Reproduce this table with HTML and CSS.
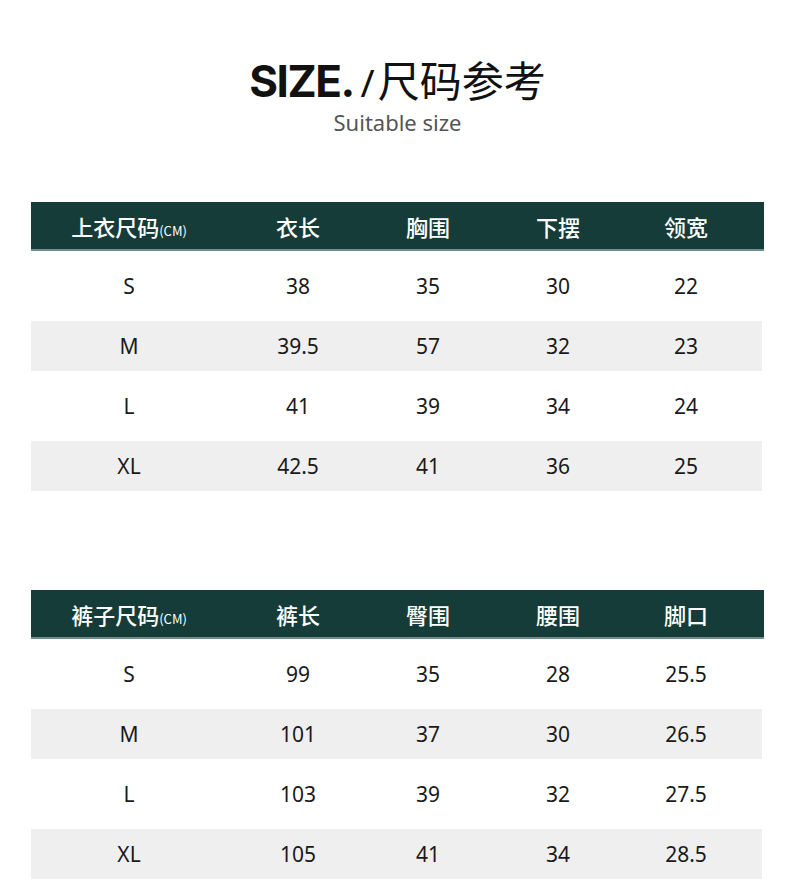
FILE: index.html
```html
<!DOCTYPE html>
<html lang="zh">
<head>
<meta charset="utf-8">
<link rel="stylesheet" href="styles.css">
</head>
<body>
<div class="page">
  <header class="title-block">
    <h1 class="title"><span class="title-en">SIZE.</span><span class="title-slash">/</span><span class="title-cn">尺码参考</span></h1>
    <p class="subtitle">Suitable size</p>
  </header>

  <section class="table table-top">
    <div class="thead">
      <div class="cell">上衣尺码<small>(CM)</small></div>
      <div class="cell">衣长</div>
      <div class="cell">胸围</div>
      <div class="cell">下摆</div>
      <div class="cell">领宽</div>
    </div>
    <div class="tbody">
      <div class="row"><div class="cell">S</div><div class="cell">38</div><div class="cell">35</div><div class="cell">30</div><div class="cell">22</div></div>
      <div class="row alt"><div class="cell">M</div><div class="cell">39.5</div><div class="cell">57</div><div class="cell">32</div><div class="cell">23</div></div>
      <div class="row"><div class="cell">L</div><div class="cell">41</div><div class="cell">39</div><div class="cell">34</div><div class="cell">24</div></div>
      <div class="row alt"><div class="cell">XL</div><div class="cell">42.5</div><div class="cell">41</div><div class="cell">36</div><div class="cell">25</div></div>
    </div>
  </section>

  <section class="table table-bottom">
    <div class="thead">
      <div class="cell">裤子尺码<small>(CM)</small></div>
      <div class="cell">裤长</div>
      <div class="cell">臀围</div>
      <div class="cell">腰围</div>
      <div class="cell">脚口</div>
    </div>
    <div class="tbody">
      <div class="row"><div class="cell">S</div><div class="cell">99</div><div class="cell">35</div><div class="cell">28</div><div class="cell">25.5</div></div>
      <div class="row alt"><div class="cell">M</div><div class="cell">101</div><div class="cell">37</div><div class="cell">30</div><div class="cell">26.5</div></div>
      <div class="row"><div class="cell">L</div><div class="cell">103</div><div class="cell">39</div><div class="cell">32</div><div class="cell">27.5</div></div>
      <div class="row alt"><div class="cell">XL</div><div class="cell">105</div><div class="cell">41</div><div class="cell">34</div><div class="cell">28.5</div></div>
    </div>
  </section>
</div>
</body>
</html>
```

FILE: styles.css
```css
* { box-sizing: border-box; }
html, body { margin: 0; padding: 0; background: #ffffff; }
body {
  font-family: "Noto Sans", "Noto Sans CJK SC", sans-serif;
  color: #1a1a1a;
  width: 790px;
  height: 880px;
  overflow: hidden;
}
.page {
  padding: 53px 0 0 31px;
}
.title-block {
  width: 733px;
  display: flex;
  flex-direction: column;
  align-items: center;
}
.title {
  margin: 0;
  display: flex;
  align-items: baseline;
  line-height: 51px;
  font-weight: 400;
  color: #111;
}
.title-en {
  font-family: "Inter", "Noto Sans", sans-serif;
  font-weight: 700;
  font-size: 44px;
  letter-spacing: -1.5px;
}
.title-slash {
  font-family: "Noto Sans", sans-serif;
  font-size: 38px;
  margin: 0 3px 0 7px;
}
.title-cn {
  font-family: "Noto Sans CJK SC", sans-serif;
  font-size: 42px;
  font-weight: 400;
}
.subtitle {
  margin: 0;
  font-family: "Noto Sans", sans-serif;
  font-size: 22px;
  line-height: 28px;
  color: #555;
}
.table { width: 733px; }
.table-top { margin-top: 66px; }
.table-bottom { margin-top: 99px; }
.thead, .row {
  display: grid;
  grid-template-columns: 196px 142px 118px 142px 114px;
  padding-right: 21px;
  align-items: center;
}
.thead {
  height: 49px;
  background: #153c38;
  border-bottom: 2px solid #6f8f8b;
  color: #fff;
  font-family: "Noto Sans CJK SC", sans-serif;
  font-size: 22px;
  font-weight: 500;
}
.thead .cell { text-align: center; }
.thead small {
  font-size: 13px;
  font-weight: 400;
}
.tbody {
  display: flex;
  flex-direction: column;
  gap: 10px;
  padding-top: 10px;
}
.row {
  height: 50px;
  width: 731px;
  font-size: 21px;
  color: #1a1a1a;
}
.row .cell { text-align: center; }
.row.alt { background: #efefef; }
```
